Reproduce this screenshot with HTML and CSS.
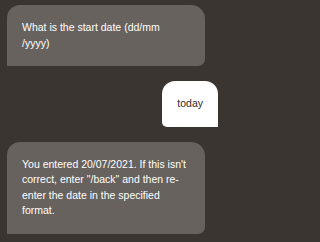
FILE: index.html
```html
<!DOCTYPE html>
<html>
<head>
<meta charset="utf-8">
<link rel="stylesheet" href="styles.css">
</head>
<body>
<div class="chat">
  <div class="msg bot">What is the start date (dd/mm<br>/yyyy)</div>
  <div class="msg user">today</div>
  <div class="msg bot">You entered 20/07/2021. If this isn't correct, enter "/back" and then re-enter the date in the specified format.</div>
</div>
</body>
</html>
```

FILE: styles.css
```css
html, body {
  margin: 0;
  padding: 0;
  background: #3a3531;
  width: 225px;
  height: 242px;
  overflow: hidden;
}
.chat {
  display: flex;
  flex-direction: column;
  gap: 15px;
  padding: 5px 7px;
  font-family: "Liberation Sans", Arial, sans-serif;
  font-size: 10.5px;
  line-height: 15.5px;
}
.msg {
  padding: 15px 11px 15px 15px;
  box-sizing: border-box;
}
.bot {
  align-self: flex-start;
  width: 198px;
  background: #67625d;
  color: #ffffff;
  border-radius: 13px 14px 7px 0;
}
.user {
  align-self: flex-end;
  background: #ffffff;
  color: #2a2a2a;
  padding: 15px;
  border-radius: 13px 13px 0 5px;
}
```
